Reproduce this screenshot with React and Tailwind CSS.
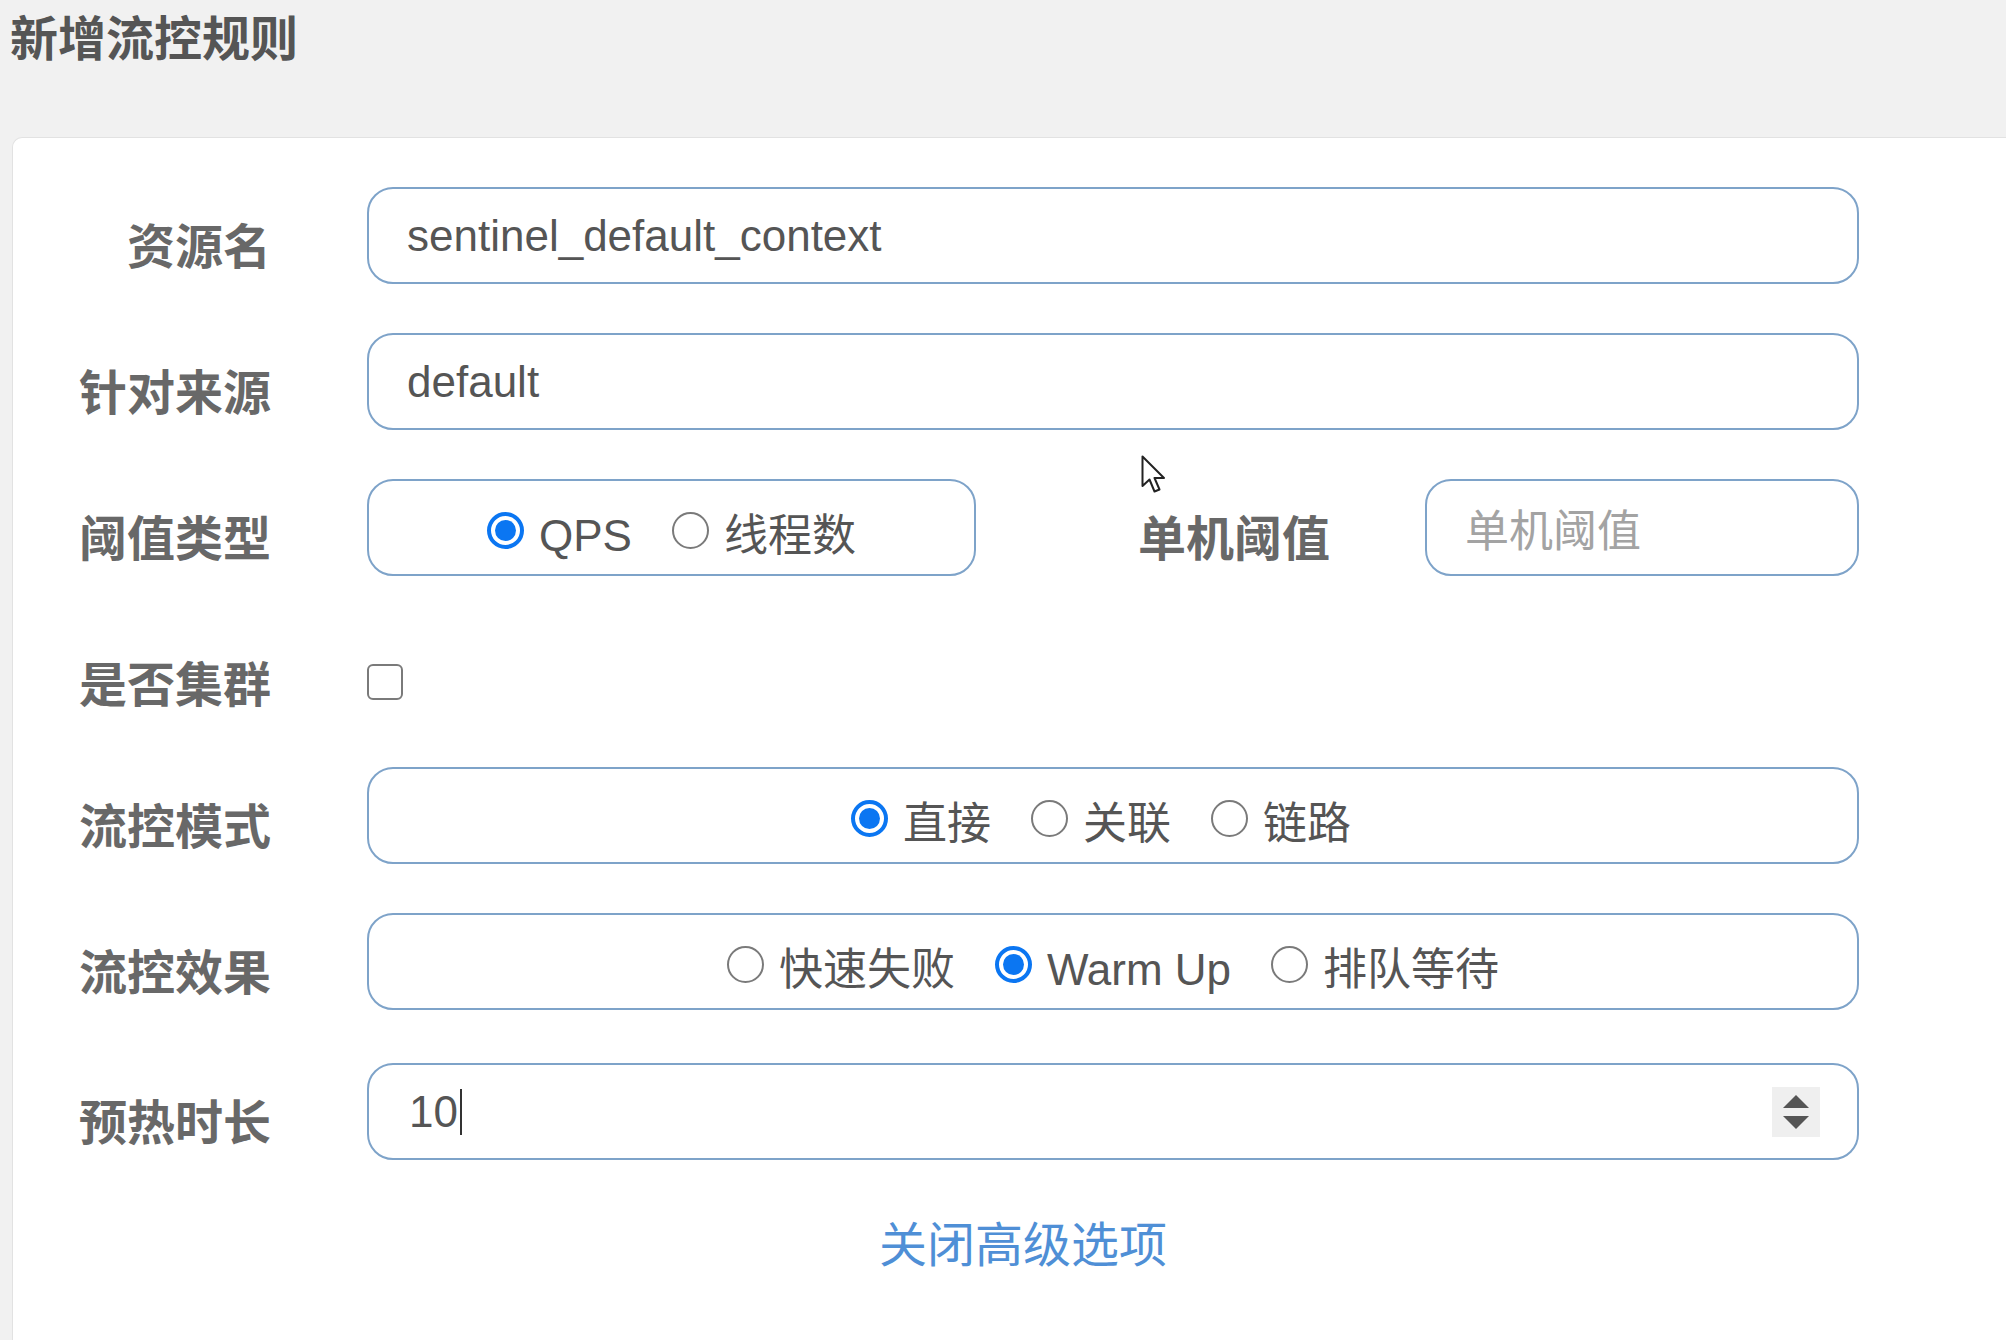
import React from "react";

const CJK = "font-['Noto_Sans_CJK_SC',sans-serif]";
const LAT = "font-['Liberation_Sans','Noto_Sans_CJK_SC',sans-serif]";

function Label({ children, className = "" }) {
  return (
    <div
      className={`shrink-0 flex items-center justify-end pt-[14px] text-[48px] leading-none font-bold text-[#686868] ${CJK} ${className}`}
    >
      {children}
    </div>
  );
}

function Radio({ checked }) {
  if (checked) {
    return (
      <span className="shrink-0 w-[37px] h-[37px] rounded-full border-[4px] border-[#0b76f2] bg-white flex items-center justify-center">
        <span className="w-[21px] h-[21px] rounded-full bg-[#0b76f2]" />
      </span>
    );
  }
  return <span className="shrink-0 w-[37px] h-[37px] rounded-full border-[2.5px] border-[#7a7a7a] bg-white" />;
}

function RadioItem({ checked, label, first }) {
  return (
    <div className={`flex items-center ${first ? "" : "ml-[40px]"}`}>
      <Radio checked={checked} />
      <span className={`ml-[15px] text-[44px] leading-none text-[#555] pt-[11px] ${LAT}`}>{label}</span>
    </div>
  );
}

function Box({ children, className = "" }) {
  return (
    <div
      className={`h-[97px] border-2 border-[#7ea3c9] rounded-[26px] bg-white flex items-center ${className}`}
    >
      {children}
    </div>
  );
}

export default function App() {
  return (
    <div className="relative min-h-screen bg-[#f1f1f1] overflow-hidden">
      <div className="h-[137px] pl-[10px] pt-[11px]">
        <h1 className={`text-[48px] leading-[48px] font-bold text-[#555] ${CJK}`}>新增流控规则</h1>
      </div>

      <div className="ml-[12px] min-h-[1203px] bg-white border-l border-t border-[#e2e2e2] rounded-tl-[10px] pt-[49px]">
        {/* 资源名 */}
        <div className="flex h-[97px] mb-[49px]">
          <Label className="w-[258px]">资源名</Label>
          <Box className="ml-[96px] w-[1492px] pl-[38px]">
            <span className={`text-[44px] leading-none text-[#555] ${LAT}`}>sentinel_default_context</span>
          </Box>
        </div>

        {/* 针对来源 */}
        <div className="flex h-[97px] mb-[49px]">
          <Label className="w-[258px]">针对来源</Label>
          <Box className="ml-[96px] w-[1492px] pl-[38px]">
            <span className={`text-[44px] leading-none text-[#555] ${LAT}`}>default</span>
          </Box>
        </div>

        {/* 阈值类型 */}
        <div className="flex h-[97px] mb-[49px]">
          <Label className="w-[258px]">阈值类型</Label>
          <Box className="ml-[96px] w-[609px] justify-center pt-[6px]">
            <RadioItem checked label="QPS" first />
            <RadioItem label="线程数" />
          </Box>
          <Label className="w-[354px]">单机阈值</Label>
          <Box className="ml-[95px] w-[434px] pl-[38px]">
            <span className={`text-[44px] leading-none text-[#a3a3a3] ${CJK}`}>单机阈值</span>
          </Box>
        </div>

        {/* 是否集群 */}
        <div className="flex h-[97px] mb-[45px]">
          <Label className="w-[258px]">是否集群</Label>
          <div className="ml-[96px] flex items-center">
            <span className="mt-[17px] w-[36px] h-[36px] rounded-[6px] border-2 border-[#7a7a7a] bg-white" />
          </div>
        </div>

        {/* 流控模式 */}
        <div className="flex h-[97px] mb-[49px]">
          <Label className="w-[258px]">流控模式</Label>
          <Box className="ml-[96px] w-[1492px] justify-center pr-[24px] pt-[6px]">
            <RadioItem checked label="直接" first />
            <RadioItem label="关联" />
            <RadioItem label="链路" />
          </Box>
        </div>

        {/* 流控效果 */}
        <div className="flex h-[97px] mb-[53px]">
          <Label className="w-[258px]">流控效果</Label>
          <Box className="ml-[96px] w-[1492px] justify-center pt-[6px]">
            <RadioItem label="快速失败" first />
            <RadioItem checked label="Warm Up" />
            <RadioItem label="排队等待" />
          </Box>
        </div>

        {/* 预热时长 */}
        <div className="flex h-[97px]">
          <Label className="w-[258px]">预热时长</Label>
          <Box className="ml-[96px] w-[1492px] pl-[40px] pr-[37px]">
            <span className={`text-[44px] leading-none text-[#555] ${LAT}`}>10</span>
            <span className="ml-[2px] w-[2px] h-[46px] bg-[#333]" />
            <div className="ml-auto w-[48px] h-[50px] bg-[#efefef] flex flex-col items-center justify-center gap-[8px]">
              <svg width="26" height="13" viewBox="0 0 26 13">
                <path d="M13 0 L26 13 L0 13 Z" fill="#555" />
              </svg>
              <svg width="26" height="13" viewBox="0 0 26 13">
                <path d="M0 0 L26 0 L13 13 Z" fill="#555" />
              </svg>
            </div>
          </Box>
        </div>

        <div className="mt-[57px] pl-[866px]">
          <span className={`text-[48px] leading-[48px] text-[#4f8fd6] ${CJK}`}>关闭高级选项</span>
        </div>
      </div>

      {/* mouse pointer */}
      <svg
        className="absolute left-[1141px] top-[455px]"
        width="27"
        height="41"
        viewBox="0 0 27 41"
      >
        <path
          d="M1.5 1.5 L1.5 31 L8.5 24.5 L13.5 36.5 L18.5 34.5 L13.5 23 L23 23 Z"
          fill="#fff"
          stroke="#222"
          strokeWidth="2"
          strokeLinejoin="round"
        />
      </svg>
    </div>
  );
}
